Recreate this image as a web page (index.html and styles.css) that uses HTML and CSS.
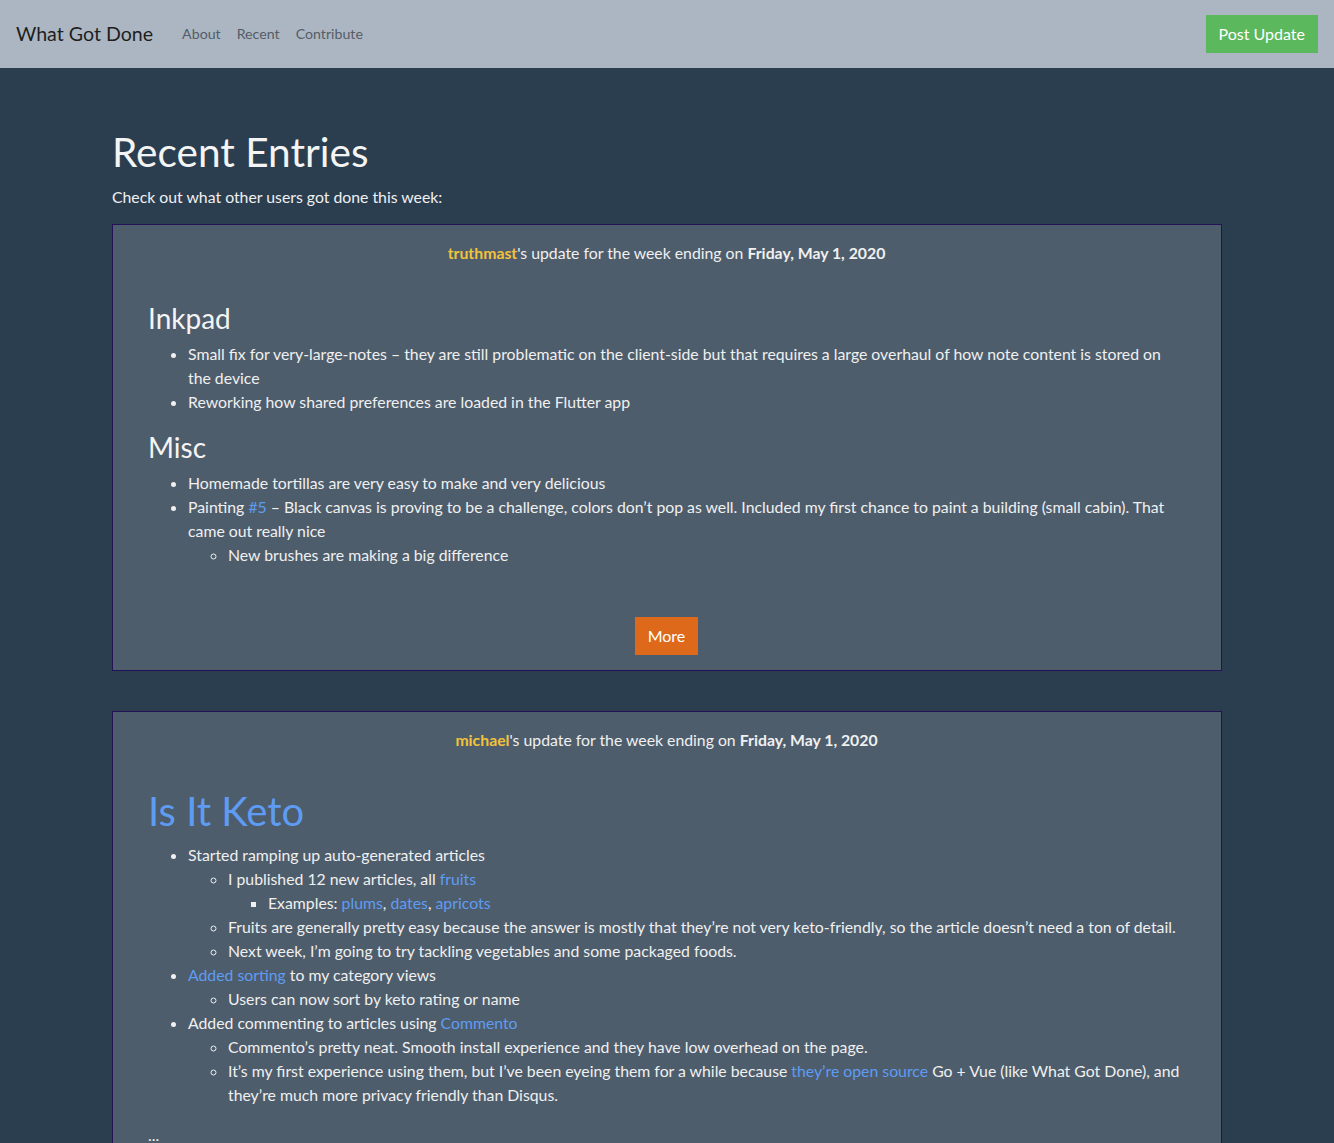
FILE: index.html
```html
<!DOCTYPE html>
<html lang="en">
<head>
<meta charset="utf-8">
<title>What Got Done - Recent Entries</title>
<link rel="stylesheet" href="styles.css">
</head>
<body>
<nav class="navbar">
  <a class="brand" href="#">What Got Done</a>
  <ul class="nav-links">
    <li><a href="#">About</a></li>
    <li><a href="#">Recent</a></li>
    <li><a href="#">Contribute</a></li>
  </ul>
  <a class="btn btn-success" href="#">Post Update</a>
</nav>

<main class="container">
  <h1 class="page-title">Recent Entries</h1>
  <p class="intro">Check out what other users got done this week:</p>

  <section class="entry">
    <p class="entry-header"><a class="user" href="#">truthmast</a>'s update for the week ending on <strong>Friday, May 1, 2020</strong></p>
    <div class="entry-body">
      <h2>Inkpad</h2>
      <ul>
        <li>Small fix for very-large-notes – they are still problematic on the client-side but that requires a large overhaul of how note content is stored on the device</li>
        <li>Reworking how shared preferences are loaded in the Flutter app</li>
      </ul>
      <h2>Misc</h2>
      <ul>
        <li>Homemade tortillas are very easy to make and very delicious</li>
        <li>Painting <a href="#">#5</a> – Black canvas is proving to be a challenge, colors don’t pop as well. Included my first chance to paint a building (small cabin). That came out really nice
          <ul>
            <li>New brushes are making a big difference</li>
          </ul>
        </li>
      </ul>
    </div>
    <div class="entry-footer"><a class="btn btn-primary" href="#">More</a></div>
  </section>

  <section class="entry">
    <p class="entry-header"><a class="user" href="#">michael</a>'s update for the week ending on <strong>Friday, May 1, 2020</strong></p>
    <div class="entry-body">
      <h1 class="big"><a href="#">Is It Keto</a></h1>
      <ul>
        <li>Started ramping up auto-generated articles
          <ul>
            <li>I published 12 new articles, all <a href="#">fruits</a>
              <ul>
                <li>Examples: <a href="#">plums</a>, <a href="#">dates</a>, <a href="#">apricots</a></li>
              </ul>
            </li>
            <li>Fruits are generally pretty easy because the answer is mostly that they’re not very keto-friendly, so the article doesn’t need a ton of detail.</li>
            <li>Next week, I’m going to try tackling vegetables and some packaged foods.</li>
          </ul>
        </li>
        <li><a href="#">Added sorting</a> to my category views
          <ul>
            <li>Users can now sort by keto rating or name</li>
          </ul>
        </li>
        <li>Added commenting to articles using <a href="#">Commento</a>
          <ul>
            <li>Commento’s pretty neat. Smooth install experience and they have low overhead on the page.</li>
            <li>It’s my first experience using them, but I’ve been eyeing them for a while because <a href="#">they’re open source</a> Go + Vue (like What Got Done), and they’re much more privacy friendly than Disqus.</li>
          </ul>
        </li>
      </ul>
      <p>...</p>
    </div>
    <div class="entry-footer"><a class="btn btn-primary" href="#">More</a></div>
  </section>
</main>
</body>
</html>
```

FILE: styles.css
```css
* { box-sizing: border-box; }

html, body {
  margin: 0;
  padding: 0;
}

body {
  background: #2b3e50;
  color: #f0f0f0;
  font-family: Lato, "Open Sans", "Liberation Sans", sans-serif;
  font-size: 15.8px;
  line-height: 24px;
}

a {
  color: #5e9cf3;
  text-decoration: none;
}

.navbar {
  display: flex;
  align-items: center;
  height: 68px;
  padding: 0 16px;
  background: #abb6c2;
}

.brand {
  color: #1e1e1e;
  font-size: 19.6px;
  margin-right: 21px;
  line-height: 1.5;
}

.nav-links {
  display: flex;
  list-style: none;
  margin: 0;
  padding: 0;
  flex: 1;
}

.nav-links a {
  display: block;
  padding: 8px;
  color: #555d66;
  font-size: 14.2px;
}

.btn {
  display: inline-block;
  height: 38px;
  line-height: 38px;
  padding: 0 13px;
  font-size: 16px;
  color: #ffffff;
}

.btn-success { background: #5cb85c; }
.btn-primary { background: #df691a; }

.container {
  width: 1110px;
  margin: 0 auto;
  padding-top: 60px;
}

.page-title {
  font-size: 40.6px;
  font-weight: 400;
  line-height: 48px;
  margin: 0 0 9px;
  color: #f4f4f4;
}

.intro {
  margin: 0 0 15px;
}

.entry {
  background: #4e5d6c;
  border: 1px solid #241258;
  margin-bottom: 40px;
  padding: 16px 36px 15px 35px;
}

.entry-header {
  text-align: center;
  margin: 0 0 36px;
}

.user {
  color: #f2c23c;
  font-weight: 700;
}

.entry-header strong {
  font-weight: 700;
}

.entry-body h2 {
  font-size: 28px;
  font-weight: 400;
  line-height: 34px;
  margin: 0 0 7px;
  color: #f4f4f4;
}

.entry-body h1.big {
  font-size: 40px;
  font-weight: 400;
  line-height: 47px;
  margin: 0 0 8px;
}

.entry-body ul {
  margin: 0 0 16px;
  padding-left: 40px;
}

.entry-body ul ul {
  margin-bottom: 0;
}

.entry-body p {
  margin: 0 0 16px;
}

.entry-footer {
  display: flex;
  justify-content: center;
  padding-top: 34px;
}
```
